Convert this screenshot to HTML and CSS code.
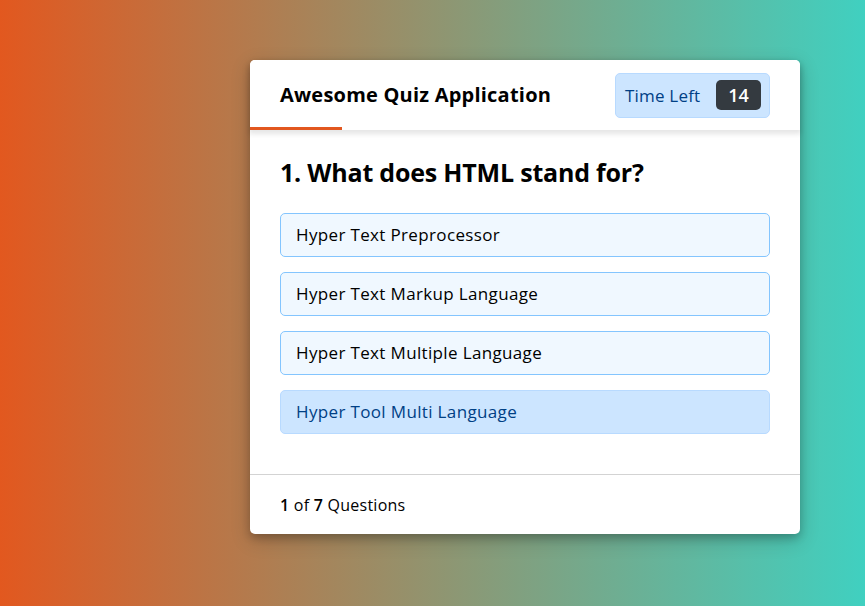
FILE: index.html
```html
<!DOCTYPE html>
<html>
<head>
<meta charset="utf-8">
<link rel="stylesheet" href="styles.css">
</head>
<body>
<div class="quiz-box">
  <header class="quiz-header">
    <div class="title">Awesome Quiz Application</div>
    <div class="timer">
      <span class="time-left">Time Left</span>
      <span class="timer-sec">14</span>
    </div>
    <div class="time-line"></div>
  </header>
  <section class="quiz-body">
    <div class="que-text">1. What does HTML stand for?</div>
    <div class="option-list">
      <div class="option">Hyper Text Preprocessor</div>
      <div class="option">Hyper Text Markup Language</div>
      <div class="option">Hyper Text Multiple Language</div>
      <div class="option option-hover">Hyper Tool Multi Language</div>
    </div>
  </section>
  <footer class="quiz-footer">
    <span class="total-que"><b>1</b> of <b>7</b> Questions</span>
  </footer>
</div>
</body>
</html>
```
FILE: styles.css
```css
* { box-sizing: border-box; margin: 0; padding: 0; }
html, body { height: 100%; }
body {
  font-family: "Open Sans", sans-serif;
  background: linear-gradient(to right, #e2581f, #40d0c0);
  padding: 60px 0 0 250px;
  overflow: hidden;
}
.quiz-box {
  width: 550px;
  background: #fff;
  border-radius: 5px;
  box-shadow: 0 4px 8px 0 rgba(0,0,0,0.2), 0 6px 20px 0 rgba(0,0,0,0.19);
}
.quiz-header {
  position: relative;
  z-index: 2;
  height: 70px;
  padding: 0 30px;
  background: #fff;
  border-radius: 5px 5px 0 0;
  display: flex;
  align-items: center;
  justify-content: space-between;
  box-shadow: 0 3px 5px 1px rgba(0,0,0,0.1);
}
.title { font-size: 20px; font-weight: 700; color: #000; letter-spacing: 0.22px; margin-top: -2px; }
.timer {
  color: #004085;
  background: #cce5ff;
  border: 1px solid #b8daff;
  height: 45px;
  width: 155px;
  padding: 0 8px;
  border-radius: 5px;
  display: flex;
  align-items: center;
  justify-content: space-between;
}
.time-left { font-size: 17px; font-weight: 400; letter-spacing: 0.2px; padding-left: 1px; }
.timer-sec {
  font-size: 18px;
  font-weight: 600;
  height: 30px;
  width: 45px;
  line-height: 30px;
  text-align: center;
  color: #fff;
  background: #343a40;
  border-radius: 5px;
}
.time-line {
  position: absolute;
  left: 0;
  bottom: 0;
  height: 3px;
  width: 92px;
  background: #e2571f;
}
.quiz-body { padding: 25px 30px 20px; background: #fff; }
.que-text { font-size: 25px; font-weight: 700; line-height: 34px; padding-bottom: 4px; letter-spacing: -0.2px; color: #000; }
.option-list { padding: 20px 0; display: flex; flex-direction: column; gap: 15px; }
.option {
  background: aliceblue;
  border: 1px solid #84c5fe;
  border-radius: 5px;
  padding: 8px 15px;
  font-size: 17px;
  line-height: 26px;
  letter-spacing: 0.35px;
  color: #000;
}
.option-hover { color: #004085; background: #cce5ff; border-color: #b8daff; }
.quiz-footer {
  height: 60px;
  padding: 0 30px;
  display: flex;
  align-items: center;
  border-top: 1px solid lightgrey;
  font-size: 16px;
  letter-spacing: 0.25px;
}
.total-que b { font-weight: 600; }
```
